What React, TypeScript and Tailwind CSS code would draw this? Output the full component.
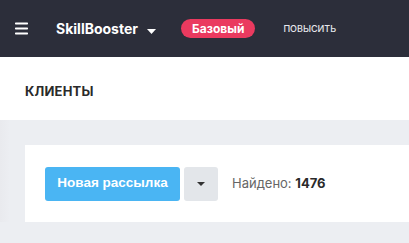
import { Menu } from 'lucide-react';

export default function App() {
  return (
    <div className="min-h-screen w-[409px] overflow-hidden bg-[#eceef2] font-['Inter','Roboto',sans-serif]">
      {/* Top bar */}
      <header className="h-[57px] bg-[#2c2e3a] flex items-center text-white">
        <Menu className="ml-[13px] w-[17px] h-[17px]" strokeWidth={2.6} />
        <div className="ml-[26px] flex items-center">
          <span className="text-[14px] font-bold">SkillBooster</span>
          <svg className="ml-[9px] mt-[6px]" width="9" height="5" viewBox="0 0 9 5">
            <path d="M0 0h9L4.5 5z" fill="#fff" />
          </svg>
        </div>
        <span className="ml-[25px] h-[19px] px-[11px] rounded-full bg-[#ea3a5f] text-[12px] font-bold leading-[19px]">
          Базовый
        </span>
        <span className="ml-[28px] text-[9px] font-medium text-[#e6e7eb]">ПОВЫСИТЬ</span>
      </header>

      <div className="flex">
        <div className="w-[10px] shrink-0 bg-gradient-to-r from-[#e9eaee] to-transparent" />
        <div className="flex-1 -ml-[10px]">
          {/* Page title */}
          <div className="h-[63px] bg-white flex items-center pl-[25px] pt-[6px]">
            <h1 className="text-[13px] font-bold text-[#2a2a2a] tracking-[0.2px]">КЛИЕНТЫ</h1>
          </div>

          <div className="pt-[25px] pl-[25px]">
            <div className="bg-white h-[77px] flex items-center pl-[20px]">
              <button className="h-[34px] w-[135px] rounded-[3px] bg-[#4ab5f3] text-white text-[13.5px] font-semibold font-['Liberation_Sans',sans-serif]">
                Новая рассылка
              </button>
              <button className="ml-[4px] h-[34px] w-[34px] rounded-[3px] bg-[#e3e6ea] flex items-center justify-center">
                <svg width="8" height="4" viewBox="0 0 8 4">
                  <path d="M0 0h8L4 4z" fill="#333" />
                </svg>
              </button>
              <span className="ml-[14px] text-[13px] text-[#666]">
                Найдено: <b className="text-[#2a2a2a] font-bold">1476</b>
              </span>
            </div>
          </div>
        </div>
      </div>
    </div>
  );
}
